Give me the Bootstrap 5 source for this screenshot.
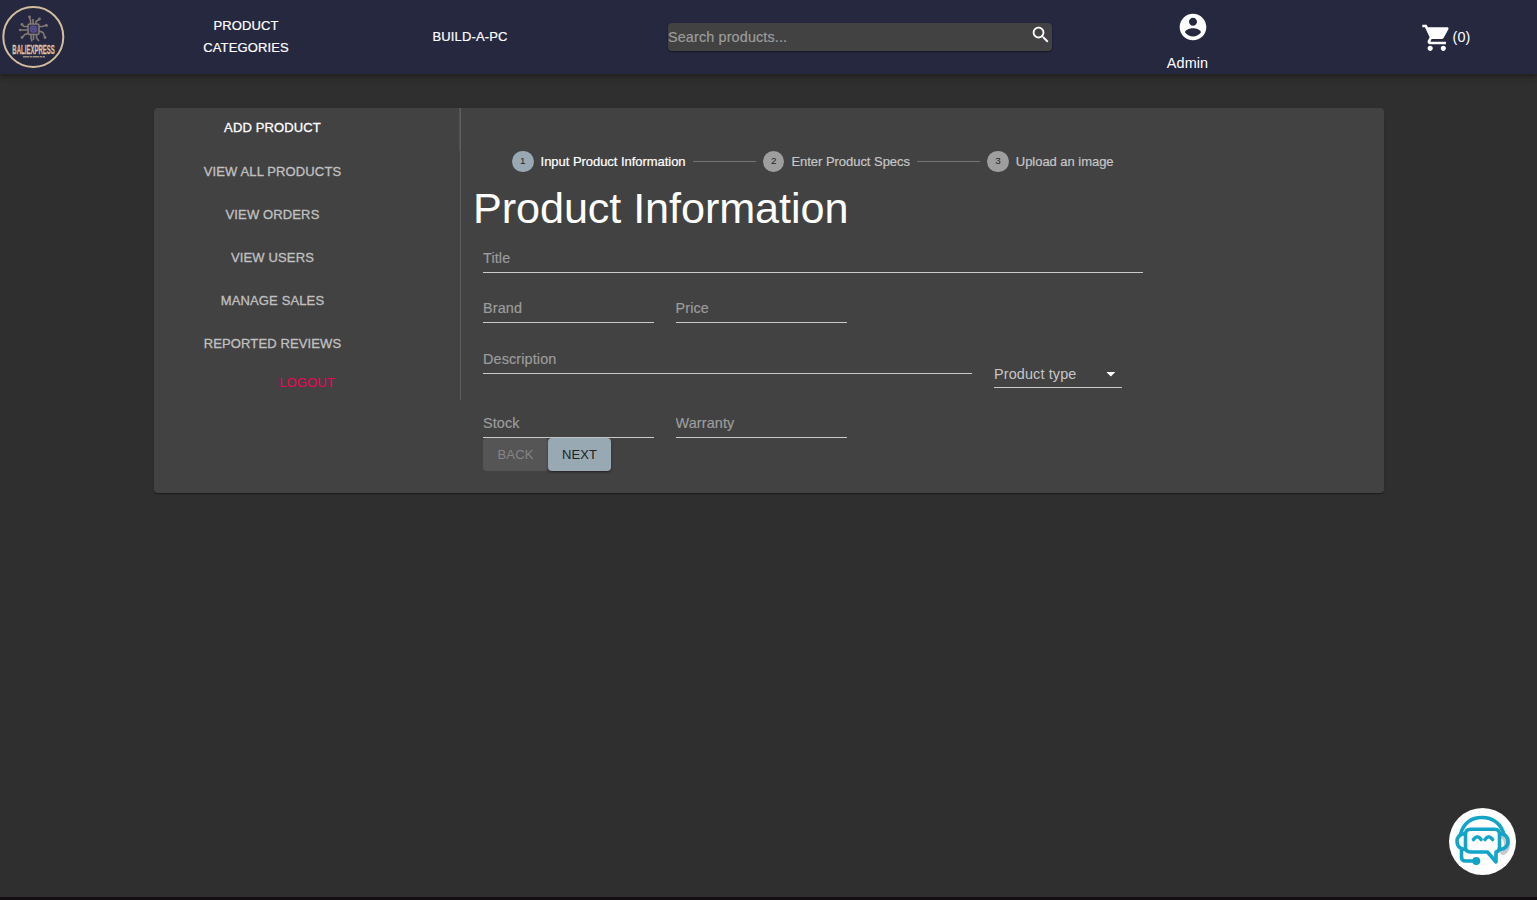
<!DOCTYPE html>
<html lang="en">
<head>
<meta charset="utf-8">
<title>Add Product</title>
<link href="https://cdn.jsdelivr.net/npm/bootstrap@5.3.0/dist/css/bootstrap.min.css" rel="stylesheet">
<style>
body{background:#2f2f2f;color:#fff;font-family:"Liberation Sans",Arial,sans-serif;font-size:14.4px;line-height:1.5;letter-spacing:.00938em;height:900px;overflow:hidden}
.topbar{height:74px;background:#26283f;box-shadow:0 2px 4px -1px rgba(0,0,0,.2),0 4px 5px rgba(0,0,0,.14),0 1px 9px rgba(0,0,0,.12);display:grid;grid-template-columns:154px 184px 264px 450px 270px 1fr}
.caps{font-size:13px;font-weight:400;line-height:22px;letter-spacing:.13px;text-transform:uppercase}
.topbar .caps{color:#fff;text-decoration:none;-webkit-text-stroke:.2px}
.finder{height:28px;width:384px;margin:23px 0 0 66px;background:#424242;border-radius:4px;box-shadow:0 1px 2px rgba(0,0,0,.5)}
.finder input{background:none;border:0;outline:0;padding:0;color:#fff;letter-spacing:inherit;height:28px}
.finder input::placeholder{color:#9c9c9c;opacity:1;-webkit-text-stroke:.2px}
.panel{width:1230px;height:385px;margin:34px 0 0 154px;background:#424242;border-radius:4px;box-shadow:0 2px 1px -1px rgba(0,0,0,.2),0 1px 1px rgba(0,0,0,.14),0 1px 3px rgba(0,0,0,.12)}
.side{width:307px;height:292px;border-right:1px solid #5e5e5e}
.side a{display:block;height:43.2px;padding:9.5px 69px 0 0;color:#c0c0c0;text-align:center;text-decoration:none;font-weight:400;-webkit-text-stroke:.3px}
.side a.active{color:#fff;border-right:1px solid #f50057;padding:9px 68px 0 0}
.side a.exit{color:#f50057;padding:4.5px 0 0;height:auto;-webkit-text-stroke:0}
.main{padding:42px 0 0 12px}
.steps{padding-left:39px;height:23px;font-size:13px;letter-spacing:-.04px;color:#c6c6c6;-webkit-text-stroke:.2px}
.steps .now{color:#fff}
.dot{width:21.6px;height:21.6px;border-radius:50%;background:#9e9e9e;color:#222;font-size:9.8px;margin-right:7px;-webkit-text-stroke:0}
.now .dot{background:#98a9b4}
.link-line{width:63px;height:1px;background:#757575;margin:0 7px 0 7.3px}
h1{font-size:43.2px;line-height:50.4px;font-weight:400;letter-spacing:-.08px;margin:0}
.fieldline{height:29px;border:0;border-bottom:1px solid #cacaca;border-radius:0;background:none;color:#fff;padding:1px 0 0;letter-spacing:inherit;outline:0}
.fieldline::placeholder{color:#9c9c9c;opacity:1;-webkit-text-stroke:.2px}
.w-short{width:171px}.w-desc{width:489px}.w-full660{width:660px}
.kind{width:128px;color:#c6c6c6;cursor:pointer;padding-top:3px}
.kind svg{margin-top:-2px}
.act{height:33px;border:0;border-radius:4px;padding:1px 0 0;color:#222}
.act.prev{width:65px;background:#555;color:#858585}
.act.next{width:63px;background:#98a9b4;box-shadow:0 2px 2px -1px rgba(0,0,0,.3),0 1px 3px rgba(0,0,0,.3)}
.chat{right:21px;bottom:25px;width:67px;height:67px;background:#fff}
.strip{height:3px;background:#150f13}
</style>
</head>
<body>
<nav class="topbar">
  <a href="#" class="d-block">
    <svg width="74" height="74" viewBox="0 0 74 74" class="d-block">
      <circle cx="33.3" cy="36.9" r="30" fill="none" stroke="#d2bd9c" stroke-width="2"/>
      <g fill="none" stroke="#837872" stroke-width="1.6">
        <path d="M30.5 24v-3.5l-1-3M36 24v-2.5l3-2M39 26.5h3.5l4-1.5M39 31l4 1.500 2 5M36.500 34.500v3.500l2.500 3M31 34.500v3l1 4M29 33l-4 1.500-3 3M28 30h-8M28 26.500h-4l-2-2M33 24v-5M33.500 35v5"/>
        <rect x="28" y="24" width="11" height="10.500" rx="1.500" fill="#353456"/>
      </g>
      <g fill="none" stroke="#6257a0" stroke-width="1.200"><circle cx="33.500" cy="29.200" r="2.800"/><circle cx="33.500" cy="29.200" r=".8"/></g>
      <g fill="#837872"><circle cx="29.500" cy="16.800" r="1.400"/><circle cx="39.500" cy="19" r="1.400"/><circle cx="46.500" cy="25.500" r="1.400"/><circle cx="45" cy="37.500" r="1.400"/><circle cx="22" cy="37.500" r="1.400"/><circle cx="22" cy="24.500" r="1.400"/><circle cx="20" cy="30" r="1.200"/></g>
      <text transform="translate(12.300 54.300) scale(.472 1)" font-family="Liberation Sans" font-weight="700" font-size="12.800" letter-spacing="0" fill="#d8c4a4" stroke="#d8c4a4" stroke-width=".3">BALIEXPRESS</text>
      <path d="M23 56.800h22" stroke="#9c8e80" stroke-width="1.400" stroke-dasharray="6 .5 3 .5"/>
    </svg>
  </a>
  <a href="#" class="caps text-center" style="padding:15px 40px 0">Product Categories</a>
  <a href="#" class="caps text-center" style="padding-top:26px">Build-a-PC</a>
  <div class="finder d-flex">
    <input class="flex-grow-1" type="text" placeholder="Search products...">
    <svg style="margin-top:1px" width="21.6" height="21.6" viewBox="0 0 24 24" fill="#fff"><path d="M15.5 14h-.79l-.28-.27C15.41 12.59 16 11.11 16 9.5 16 5.91 13.09 3 9.5 3S3 5.91 3 9.5 5.91 16 9.5 16c1.61 0 3.09-.59 4.23-1.57l.27.28v.79l5 4.99L20.49 19l-4.99-5zm-6 0C7.01 14 5 11.99 5 9.5S7.01 5 9.5 5 14 7.01 14 9.5 11.99 14 9.5 14z"/></svg>
  </div>
  <div class="text-center" style="padding:10.5px 0 0 1px">
    <svg class="d-block" style="margin:0 0 0 124.4px" width="32" height="32" viewBox="0 0 24 24" fill="#fff"><path d="M12 2C6.480 2 2 6.480 2 12s4.480 10 10 10 10-4.480 10-10S17.520 2 12 2zm0 3c1.660 0 3 1.340 3 3s-1.340 3-3 3-3-1.340-3-3 1.340-3 3-3zm0 14.200c-2.500 0-4.710-1.280-6-3.220.03-1.990 4-3.080 6-3.080 1.990 0 5.970 1.090 6 3.080-1.290 1.940-3.500 3.220-6 3.220z"/></svg>
    <div style="padding-top:10.5px">Admin</div>
  </div>
  <div class="d-flex align-items-center" style="padding-left:99px">
    <svg width="31.500" height="31.500" viewBox="0 0 24 24" fill="#fff"><path d="M7 18c-1.100 0-1.990.9-1.990 2S5.900 22 7 22s2-.9 2-2-.9-2-2-2zM1 2v2h2l3.600 7.590-1.350 2.450c-.16.28-.25.61-.25.960 0 1.100.9 2 2 2h12v-2H7.420c-.14 0-.25-.11-.25-.25l.03-.12.9-1.630h7.450c.75 0 1.410-.41 1.750-1.030l3.580-6.490c.08-.14.12-.31.12-.48 0-.55-.45-1-1-1H5.210l-.94-2H1zm16 16c-1.100 0-1.990.9-1.990 2s.89 2 1.990 2 2-.9 2-2-.9-2-2-2z"/></svg>
    <span style="padding-top:1px">(0)</span>
  </div>
</nav>

<div class="panel d-flex">
  <aside class="side caps">
    <a href="#" class="active">Add Product</a>
    <a href="#">View All Products</a>
    <a href="#">View Orders</a>
    <a href="#">View Users</a>
    <a href="#">Manage Sales</a>
    <a href="#">Reported Reviews</a>
    <a href="#" class="exit">Logout</a>
  </aside>
  <main class="main flex-grow-1">
    <div class="steps d-flex align-items-center">
      <div class="d-flex align-items-center now"><span class="dot d-flex align-items-center justify-content-center">1</span>Input Product Information</div>
      <div class="link-line"></div>
      <div class="d-flex align-items-center"><span class="dot d-flex align-items-center justify-content-center">2</span>Enter Product Specs</div>
      <div class="link-line"></div>
      <div class="d-flex align-items-center"><span class="dot d-flex align-items-center justify-content-center">3</span>Upload an image</div>
    </div>
    <h1 style="padding-top:10px">Product Information</h1>
    <form style="padding:10.5px 0 0 10px">
      <input class="fieldline w-full660 d-block" placeholder="Title">
      <div class="d-flex" style="gap:21.5px;margin-top:21px">
        <input class="fieldline w-short" placeholder="Brand"><input class="fieldline w-short" placeholder="Price">
      </div>
      <div class="d-flex" style="gap:22px;margin-top:22px">
        <input class="fieldline w-desc" placeholder="Description">
        <div class="fieldline kind d-flex align-items-center justify-content-between" style="margin-top:14px"><span>Product type</span><svg width="21.6" height="21.6" viewBox="0 0 24 24" fill="#fff"><path d="M7 10l5 5 5-5z"/></svg></div>
      </div>
      <div class="d-flex" style="gap:21.5px;margin-top:21px">
        <input class="fieldline w-short" placeholder="Stock"><input class="fieldline w-short" placeholder="Warranty">
      </div>
      <div class="d-flex">
        <button type="button" class="act prev caps">Back</button><button type="button" class="act next caps">Next</button>
      </div>
    </form>
  </main>
</div>

<a href="#" class="chat rounded-circle position-fixed">
  <svg class="d-block" width="67" height="67" viewBox="0 0 67 67" fill="none" stroke="#12a5c8" stroke-width="3.6" stroke-linecap="round" stroke-linejoin="round">
    <path d="M54 28q4 2 4 8t-4 8" stroke="#c5c9cb" stroke-width="6"/>
    <path d="M11.5 26C15 14.5 23 9.500 33 9.500S51 14.500 55 26"/>
    <path d="M21.500 21.300h24q5 0 5 5v12.700q0 4.500-3.500 5v10l-8.500-10h-17q-5 0-5-5v-12.700q0-5 5-5z"/>
    <path d="M16 25.500q-8 1-8 8t8 8M51 25.500q8 1 8 8t-8 8M12.500 42v7q0 4 4 4H27"/>
    <path d="M24.500 31.500q3.800-5.500 7.600 0M36 31.500q3.800-5.500 7.600 0"/>
    <circle cx="27.300" cy="53" r="3" fill="#12a5c8" stroke-width="2"/>
  </svg>
</a>
<div class="strip fixed-bottom"></div>
<script src="https://cdn.jsdelivr.net/npm/bootstrap@5.3.0/dist/js/bootstrap.bundle.min.js"></script>
</body>
</html>
